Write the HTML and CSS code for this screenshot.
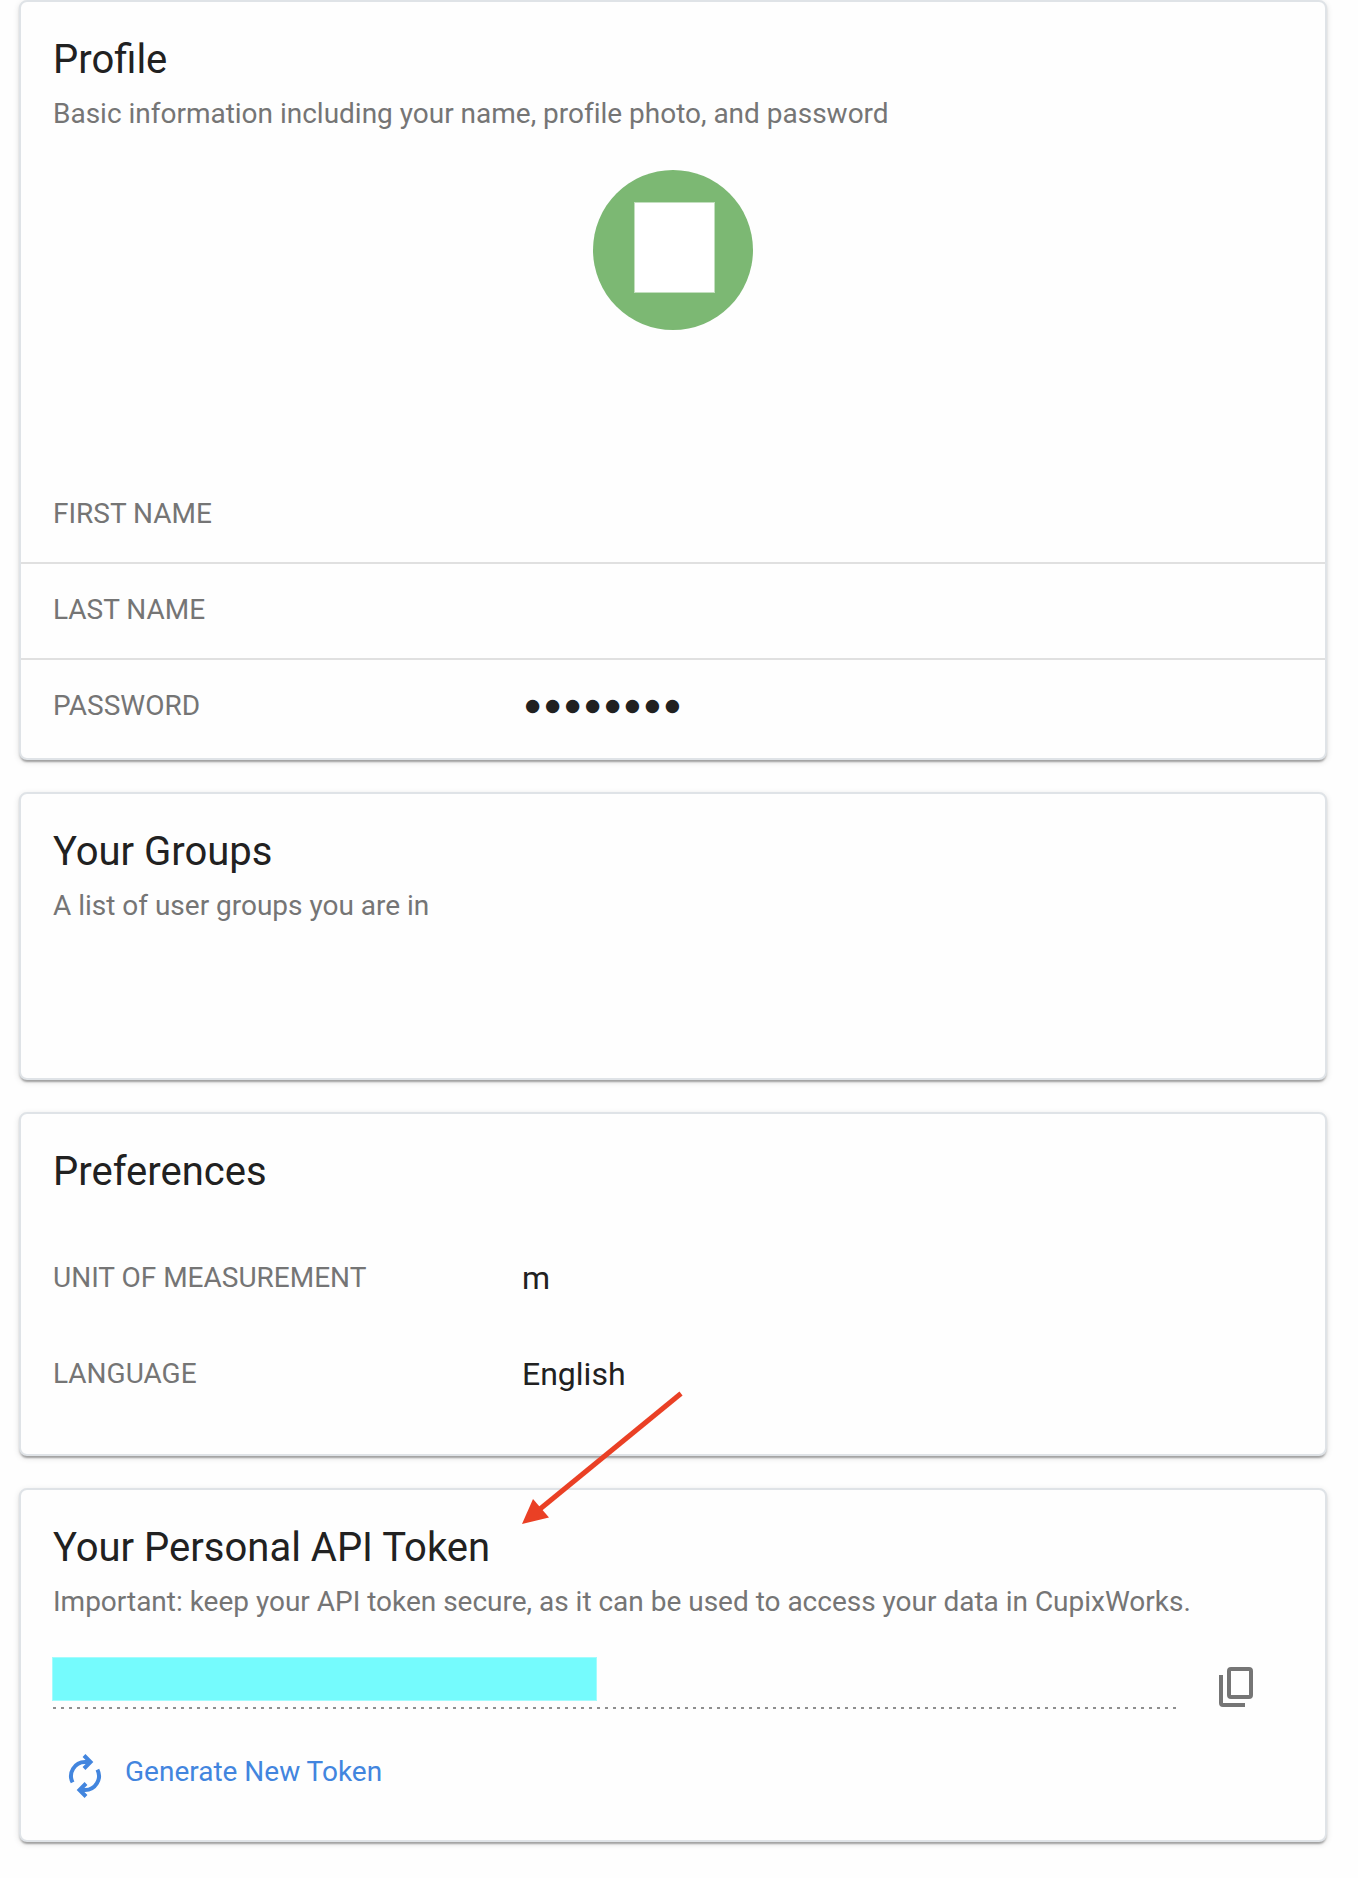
FILE: index.html
```html
<!DOCTYPE html>
<html lang="en">
<head>
<meta charset="utf-8">
<title>Profile</title>
<link rel="stylesheet" href="styles.css">
</head>
<body>
<main class="page">
  <section class="card card-profile">
    <h2 class="title">Profile</h2>
    <p class="subtitle">Basic information including your name, profile photo, and password</p>
    <div class="avatar"><span class="avatar-mark"></span></div>
    <div class="rows">
      <div class="row"><span class="label">FIRST NAME</span></div>
      <div class="row"><span class="label">LAST NAME</span></div>
      <div class="row"><span class="label">PASSWORD</span><span class="dots">●●●●●●●●</span></div>
    </div>
  </section>

  <section class="card card-groups">
    <h2 class="title">Your Groups</h2>
    <p class="subtitle">A list of user groups you are in</p>
  </section>

  <section class="card card-preferences">
    <h2 class="title">Preferences</h2>
    <div class="rows rows-plain">
      <div class="row"><span class="label">UNIT OF MEASUREMENT</span><span class="value">m</span></div>
      <div class="row"><span class="label">LANGUAGE</span><span class="value">English</span></div>
    </div>
  </section>

  <section class="card card-token">
    <h2 class="title">Your Personal API Token</h2>
    <p class="subtitle">Important: keep your API token secure, as it can be used to access your data in CupixWorks.</p>
    <div class="token">
      <div class="token-field"><div class="token-mask"></div></div>
      <svg class="copy" width="34" height="40" viewBox="0 0 34 40" fill="none" stroke="#757575" stroke-width="4">
        <rect x="10" y="2" width="22" height="28" rx="2"/>
        <path d="M2 8V36Q2 38 4 38H26"/>
      </svg>
    </div>
    <div class="generate">
      <svg class="refresh" width="48" height="48" viewBox="0 0 48 48" fill="none" stroke="#4285de" stroke-width="4">
        <path d="M11.6 30.4A14 14 0 0 1 24 10H29M23 3.5L29.5 10L23 16.5"/>
        <path d="M36.4 17.6A14 14 0 0 1 24 38H19M25 44.5L18.5 38L25 31.5"/>
      </svg>
      <span class="generate-text">Generate New Token</span>
    </div>
  </section>

  <svg class="pointer" width="162" height="134" viewBox="0 0 162 134">
    <path d="M159 3.5L18 119" stroke="#ea4025" stroke-width="5" fill="none"/>
    <path d="M0 134L11 109L27 127.5Z" fill="#ea4025"/>
  </svg>
</main>
</body>
</html>
```

FILE: styles.css
```css
* { box-sizing: border-box; }

body {
  margin: 0;
  background: #fefefe;
  color: #212121;
  font-family: Roboto, sans-serif;
}

.page {
  position: relative;
  width: 1358px;
  height: 1878px;
  padding: 0 31px 0 19px;
  display: flex;
  flex-direction: column;
  gap: 32px;
  overflow: hidden;
}

.card {
  border: 2px solid #dfe3e7;
  border-radius: 8px;
  background: #fefefe;
  box-shadow: 0 4px 2px -2px rgba(0, 0, 0, .2), 0 2px 2px 0 rgba(0, 0, 0, .14), 0 2px 6px 0 rgba(0, 0, 0, .12);
  padding-top: 30px;
}

.card-profile { height: 760px; }
.card-groups { height: 288px; }
.card-preferences { height: 344px; }
.card-token { height: 354px; }

.title {
  margin: 0;
  padding: 0 32px;
  font-size: 40px;
  font-weight: 400;
  line-height: 56px;
}

.subtitle {
  margin: 6px 0 0;
  padding: 0 32px;
  font-size: 28px;
  line-height: 40px;
  letter-spacing: -.01px;
  color: #757575;
  white-space: nowrap;
}

.avatar {
  width: 160px;
  height: 160px;
  margin: 36px auto 0;
  padding: 32px 0 0 41px;
  border-radius: 50%;
  background: #7cb873;
}

.avatar-mark {
  display: block;
  width: 81px;
  height: 91px;
  border: 1px solid #c3dfbf;
  background: #fff;
}

.rows { margin-top: 136px; }
.rows-plain { margin-top: 30px; }

.row {
  display: flex;
  align-items: center;
  height: 96px;
  padding: 0 32px;
}

.rows:not(.rows-plain) .row + .row {
  padding-bottom: 2px;
  border-top: 2px solid #e0e0e0;
}

.label {
  width: 469px;
  font-size: 28px;
  line-height: 40px;
  color: #757575;
}

.value {
  font-size: 32px;
  line-height: 40px;
}

.dots {
  margin: -2px 0 0 3px;
  font-family: "DejaVu Sans", sans-serif;
  font-size: 17.5px;
  line-height: 40px;
  letter-spacing: 4.7px;
}

.token {
  display: flex;
  align-items: flex-start;
  margin-top: 35px;
  padding-left: 31px;
}

.token-field {
  width: 1124px;
  height: 52px;
  background: repeating-linear-gradient(90deg, transparent 0 1px, #8f8f8f 1px 4px, transparent 4px 8px) left bottom / 100% 2px no-repeat;
}

.token-mask {
  width: 545px;
  height: 44px;
  border: 1px solid #a3fcfd;
  background: #75fbfd;
}

.copy { margin: 10px 0 0 43px; }

.generate {
  display: flex;
  align-items: center;
  margin-top: 43px;
  padding-left: 40px;
}

.generate-text {
  margin: -8px 0 0 16px;
  font-size: 28px;
  line-height: 40px;
  color: #4285de;
}

.pointer {
  position: absolute;
  left: 522px;
  top: 1390px;
}
```
